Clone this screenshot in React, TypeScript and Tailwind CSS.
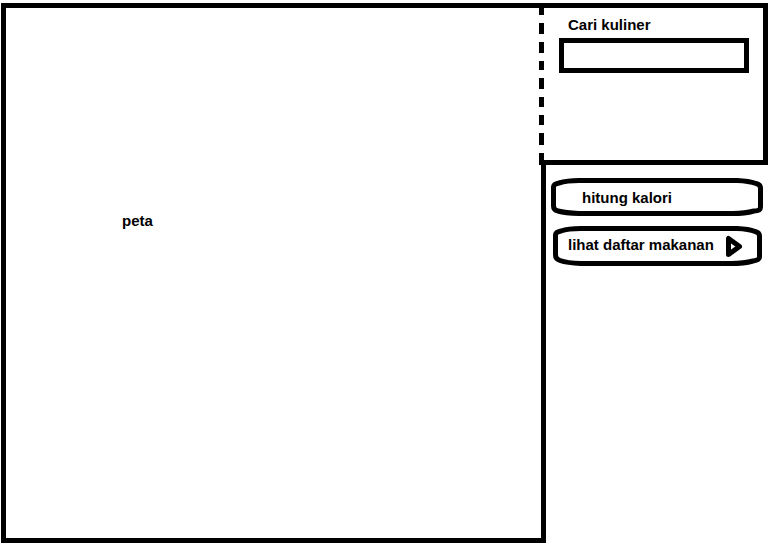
export default function App() {
  return (
    <div className="flex h-screen min-h-80 bg-white pt-[3px] pb-[5px] pl-px font-['Liberation_Sans',Arial,sans-serif] text-[15px] leading-5 font-bold text-black">
      <main className="min-w-0 flex-1 border-y-5 border-l-5 border-black px-29 pt-[203px]">
        <h1>peta</h1>
      </main>

      <aside className="flex w-[227px] shrink-0 flex-col">
        <form className="-ml-[2px] flex h-[162px] shrink-0 border-y-5 border-r-5 border-black">
          <svg
            className="-my-px h-[154px] w-[5px] shrink-0"
            viewBox="0 0 5 154"
            aria-hidden="true"
          >
            <path
              d="M2.5 0V154"
              fill="none"
              stroke="black"
              strokeWidth="5"
              strokeDasharray="8 8 11 8 11 8 9 8 11 8 10 8 10 8 12 8 10 0"
            />
          </svg>
          <div className="flex flex-1 flex-col pt-[7px] pr-[14px] pl-[15px]">
            <label htmlFor="cari" className="pl-[9px]">
              Cari kuliner
            </label>
            <input
              id="cari"
              type="text"
              className="mt-[3px] h-[35px] w-full border-5 border-black bg-white px-2 outline-none"
            />
          </div>
        </form>

        <nav className="flex flex-1 flex-col items-start gap-[10px] border-l-5 border-black pt-[13px] pl-[5px]">
          <button
            type="button"
            className="relative flex h-[38px] w-[212px] items-center pt-[2px] pl-[31px] text-left"
          >
            <svg
              className="absolute inset-0 h-full w-full"
              viewBox="0 0 212 38"
              fill="none"
              stroke="black"
              strokeWidth="5"
              strokeLinejoin="round"
              aria-hidden="true"
            >
              <path d="M2.5 9Q2.5 6 8 5Q16 2.5 28 2.5H186Q198 3 205 5.5Q209.5 6.5 209.5 10V29Q209.5 33 203 33Q194 35.5 182 35.5H28Q14 35 7 33Q2.5 32 2.5 28Z" />
            </svg>
            <span className="relative whitespace-nowrap">hitung kalori</span>
          </button>

          <button
            type="button"
            className="relative ml-[2px] flex h-10 w-[209px] items-center pb-[2px] pl-[15px] text-left"
          >
            <svg
              className="absolute inset-0 h-full w-full"
              viewBox="0 0 209 40"
              fill="none"
              stroke="black"
              strokeWidth="5"
              strokeLinejoin="round"
              aria-hidden="true"
            >
              <path d="M2.5 9Q2.5 6 8 5Q15 2.5 28 2.5H184Q196 3 202 5.5Q206.5 6.5 206.5 10V31Q206.5 34 200 35Q191 37.5 178 37.5H28Q14 37 7 34.5Q2.5 33 2.5 29Z" />
              <path d="M175.5 12.5V28.500L186.5 20.500Z" />
            </svg>
            <span className="relative whitespace-nowrap">lihat daftar makanan</span>
          </button>
        </nav>
      </aside>
    </div>
  );
}
